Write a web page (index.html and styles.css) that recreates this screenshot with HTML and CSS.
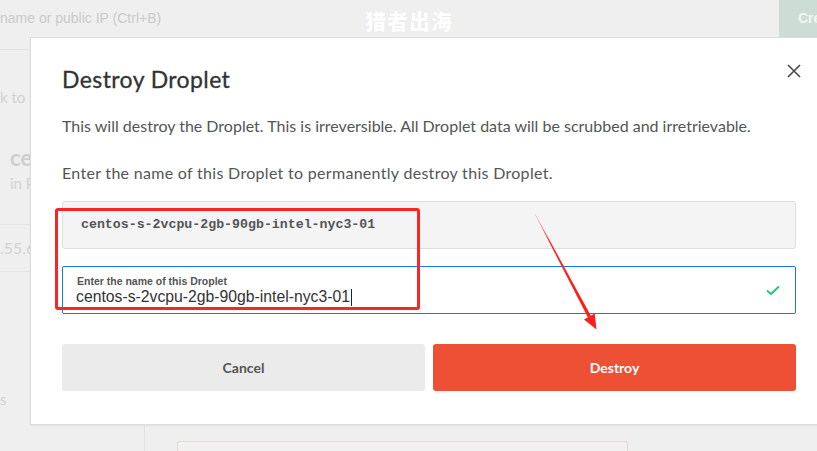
FILE: index.html
```html
<!DOCTYPE html>
<html lang="en">
<head>
<meta charset="utf-8">
<title>Destroy Droplet</title>
<link rel="stylesheet" href="styles.css">
</head>
<body>
<div class="page">
  <header class="topbar">
    <div class="search">name or public IP (Ctrl+B)</div>
    <div class="create">Create</div>
  </header>
  <div class="main">
    <aside class="side">
      <div class="side-rule"></div>
      <div class="back">k to Droplets</div>
      <div class="droplet-name">centos</div>
      <div class="droplet-in">in Project</div>
      <div class="ip-row">.55.67</div>
      <div class="side-tab">s</div>
    </aside>
    <section class="content">
      <div class="card"></div>
    </section>
  </div>
</div>

<div class="watermark">猎者出海</div>

<div class="modal">
  <button class="close" aria-label="Close">
    <svg width="14" height="14" viewBox="0 0 14 14"><path d="M1 1 L13 13 M13 1 L1 13" stroke="#4a4a4a" stroke-width="1.6" fill="none"/></svg>
  </button>
  <h2 class="title">Destroy Droplet</h2>
  <p class="text first">This will destroy the Droplet. This is irreversible. All Droplet data will be scrubbed and irretrievable.</p>
  <p class="text second">Enter the name of this Droplet to permanently destroy this Droplet.</p>
  <div class="name-box">centos-s-2vcpu-2gb-90gb-intel-nyc3-01</div>
  <div class="field">
    <div class="field-body">
      <label class="field-label">Enter the name of this Droplet</label>
      <div class="field-value">centos-s-2vcpu-2gb-90gb-intel-nyc3-01<span class="caret"></span></div>
    </div>
    <svg class="check" width="14" height="11" viewBox="0 0 14 11"><path d="M1 5.5 L5 9 L13 1.5" stroke="#1fc777" stroke-width="2" fill="none"/></svg>
  </div>
  <div class="actions">
    <button class="btn cancel">Cancel</button>
    <button class="btn destroy">Destroy</button>
  </div>
</div>

<div class="mark-box"></div>
<svg class="arrow" width="817" height="451" viewBox="0 0 817 451">
  <defs>
    <linearGradient id="fade" x1="535" y1="214" x2="596" y2="329" gradientUnits="userSpaceOnUse">
      <stop offset="0" stop-color="#ff2a2a" stop-opacity="0.35"/>
      <stop offset="0.25" stop-color="#ff1e1e"/>
      <stop offset="1" stop-color="#ff1e1e"/>
    </linearGradient>
  </defs>
  <polygon points="535.2,213.9 534.8,214.1 587.9,317.5 591.0,315.9" fill="url(#fade)"/>
  <polygon points="594.7,313.6 584.0,319.6 596.5,329.5" fill="#ff1e1e"/>
</svg>
</body>
</html>
```
FILE: styles.css
```css
* { box-sizing: border-box; }
html, body { margin: 0; padding: 0; }
body {
  width: 817px;
  height: 451px;
  overflow: hidden;
  background: #efefef;
  font-family: "Liberation Sans", Arial, sans-serif;
  position: relative;
}
.page { width: 817px; height: 451px; overflow: hidden; }
.topbar {
  height: 37px;
  display: flex;
  justify-content: space-between;
  align-items: stretch;
  overflow: hidden;
}
.search {
  color: #cacaca;
  font-size: 14px;
  line-height: 37px;
  white-space: nowrap;
}
.create {
  width: 60px;
  margin-right: -22px;
  background: #cddcd4;
  color: #f1f6f3;
  font-weight: bold;
  font-size: 14px;
  line-height: 37px;
  padding-left: 19px;
  overflow: hidden;
  white-space: nowrap;
}
.main { display: flex; height: 414px; overflow: hidden; }
.side {
  width: 145px;
  border-right: 1px solid #e2e2e2;
  display: flex;
  flex-direction: column;
  color: #d2d2d2;
  font-family: "Lato", sans-serif;
}
.side-rule { margin-top: 12px; border-top: 1px solid #e3e3e3; }
.back { margin-top: 37px; font-size: 15px; line-height: 20px; white-space: nowrap; }
.droplet-name {
  margin-top: 38px; margin-left: 10px;
  font-size: 22px; font-weight: bold; line-height: 26px; color: #cfcfcf;
}
.droplet-in { margin-left: 10px; margin-top: 1px; font-size: 15px; line-height: 22px; }
.ip-row {
  margin-top: 30px;
  border-top: 1px solid #e5e5e5;
  border-bottom: 1px solid #e5e5e5;
  height: 48px;
  font-size: 16px;
  line-height: 46px;
  white-space: nowrap;
}
.side-tab { margin-top: 117px; font-size: 15px; line-height: 20px; }
.content { flex: 1; padding: 404px 0 0 32px; }
.card {
  width: 451px;
  height: 10px;
  border: 1px solid #ead7d4;
  border-bottom: 0;
  border-radius: 3px 3px 0 0;
  background: #f1f1f1;
}
.watermark {
  position: absolute;
  left: 365px;
  top: 5px;
  font-family: "Noto Sans CJK SC", sans-serif;
  font-weight: 900;
  font-size: 21px;
  line-height: 30px;
  letter-spacing: 1px;
  color: #ffffff;
  text-shadow: 0 0 1px rgba(0,0,0,0.08);
}
.modal {
  position: absolute;
  left: 30px;
  top: 37px;
  width: 798px;
  height: 388px;
  background: #fff;
  border: 1px solid #dcdcdc;
  box-shadow: 0 1px 2px rgba(0,0,0,0.05);
  padding: 26px 31px 0 31px;
  font-family: "Lato", sans-serif;
  color: #555;
}
.close {
  position: absolute;
  right: 26px;
  top: 26px;
  width: 14px; height: 14px;
  padding: 0; border: 0; background: none;
  display: block;
}
.close svg { display: block; }
.title {
  margin: 0;
  font-size: 23px;
  line-height: 30px;
  font-weight: normal;
  letter-spacing: 0.4px;
  color: #333;
  -webkit-text-stroke: 0.3px #333;
}
.text { margin: 0; font-size: 16px; line-height: 20px; color: #555; }
.text.first { margin-top: 22px; }
.text.second { margin-top: 27px; letter-spacing: 0.3px; }
.name-box {
  margin-top: 18px;
  height: 48px;
  background: #f4f4f4;
  border: 1px solid #dedede;
  border-radius: 3px;
  padding-left: 18px;
  font-family: "Liberation Mono", "Courier New", monospace;
  font-weight: bold;
  font-size: 13.25px;
  line-height: 46px;
  color: #555;
}
.field {
  margin-top: 17px;
  height: 48px;
  border: 1px solid #1a73f0;
  border-radius: 2px;
  display: flex;
  align-items: center;
  justify-content: space-between;
  padding: 0 15px 0 13px;
}
.field-body { display: flex; flex-direction: column; padding-top: 2px; }
.field-label {
  font-family: "Liberation Sans", Arial, sans-serif;
  font-weight: bold;
  font-size: 10.5px;
  line-height: 12px;
  color: #555;
  padding-left: 1px;
}
.field-value {
  font-family: "Liberation Sans", Arial, sans-serif;
  font-size: 15.75px;
  line-height: 20px;
  color: #333;
  display: flex;
  align-items: center;
}
.caret { display: inline-block; width: 1px; height: 17px; background: #222; margin-left: 1px; }
.check { display: block; margin-top: 1px; }
.actions {
  margin-top: 30px;
  display: flex;
  gap: 8px;
}
.btn {
  flex: 1;
  height: 47px;
  border: 0;
  border-radius: 3px;
  font-family: "Lato", sans-serif;
  font-weight: bold;
  font-size: 14px;
}
.cancel { background: #ebebeb; color: #555; }
.destroy { background: #ed5034; color: #fff; }
.mark-box {
  position: absolute;
  left: 55px;
  top: 208px;
  width: 365px;
  height: 102px;
  border: 3px solid #ff2424;
  border-radius: 3px;
}
.arrow { position: absolute; left: 0; top: 0; }
```
